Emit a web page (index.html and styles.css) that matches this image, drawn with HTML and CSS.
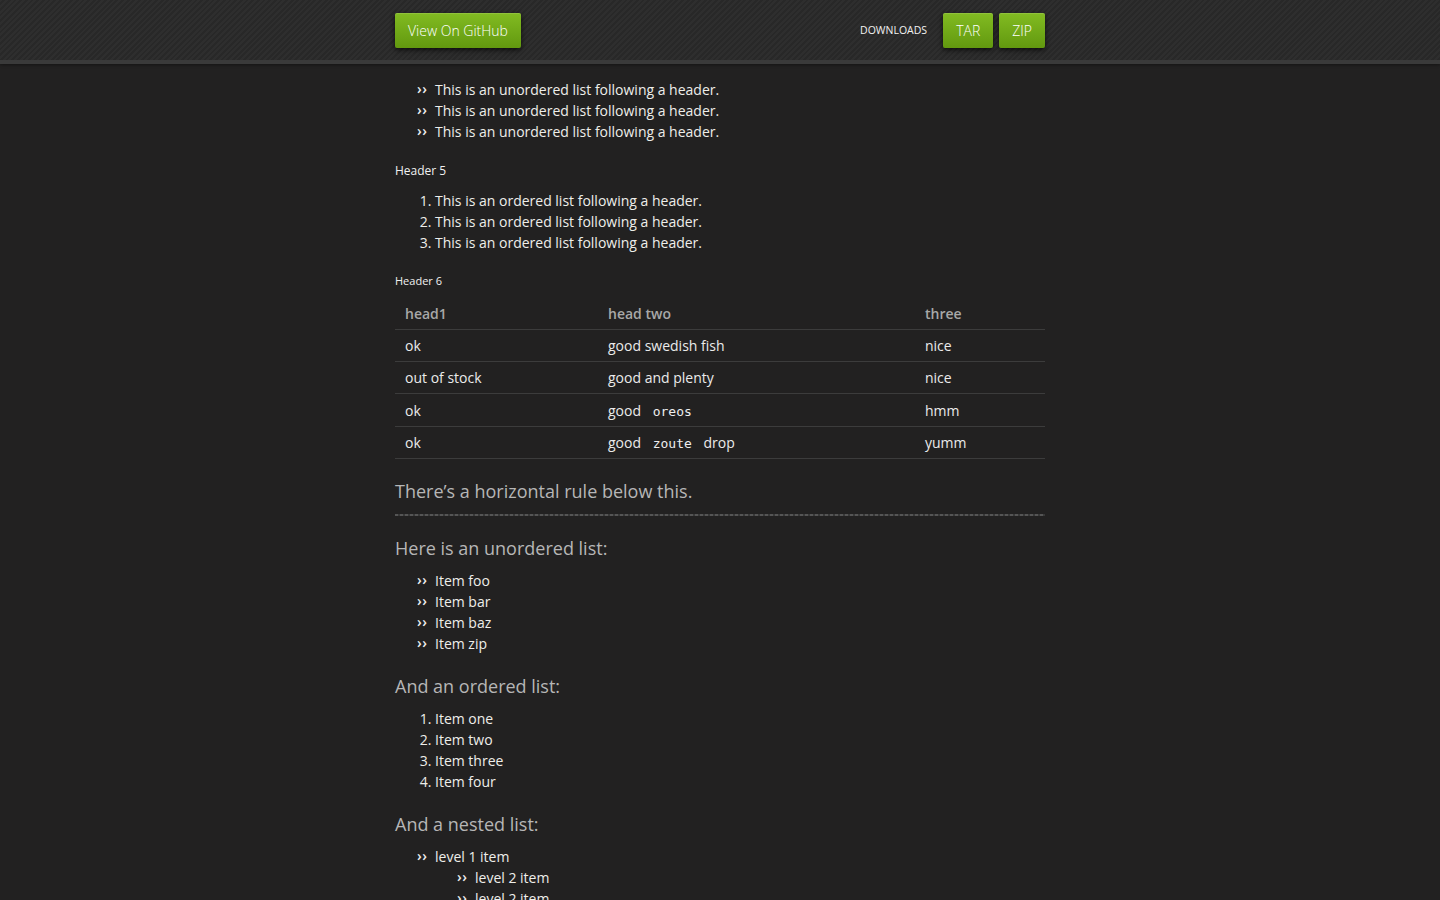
FILE: index.html
```html
<!DOCTYPE html>
<html lang="en">
<head>
<meta charset="UTF-8">
<title>Midnight</title>
<link rel="stylesheet" href="styles.css">
</head>
<body>
  <div class="header">
    <nav class="nav">
      <a class="btn btn-github" href="#">View On GitHub</a>
      <div class="downloads">
        <span class="downloads-label">Downloads</span>
        <a class="btn" href="#">TAR</a>
        <a class="btn" href="#">ZIP</a>
      </div>
    </nav>
  </div>

  <div class="wrapper">
    <ul>
      <li>This is an unordered list following a header.</li>
      <li>This is an unordered list following a header.</li>
      <li>This is an unordered list following a header.</li>
    </ul>

    <h5>Header 5</h5>
    <ol>
      <li>This is an ordered list following a header.</li>
      <li>This is an ordered list following a header.</li>
      <li>This is an ordered list following a header.</li>
    </ol>

    <h6>Header 6</h6>
    <table>
      <thead>
        <tr>
          <th class="col-1">head1</th>
          <th class="col-2">head two</th>
          <th>three</th>
        </tr>
      </thead>
      <tbody>
        <tr>
          <td>ok</td>
          <td>good swedish fish</td>
          <td>nice</td>
        </tr>
        <tr>
          <td>out of stock</td>
          <td>good and plenty</td>
          <td>nice</td>
        </tr>
        <tr>
          <td>ok</td>
          <td>good <code>oreos</code></td>
          <td>hmm</td>
        </tr>
        <tr>
          <td>ok</td>
          <td>good <code>zoute</code> drop</td>
          <td>yumm</td>
        </tr>
      </tbody>
    </table>

    <h3>There’s a horizontal rule below this.</h3>
    <hr>

    <h3>Here is an unordered list:</h3>
    <ul>
      <li>Item foo</li>
      <li>Item bar</li>
      <li>Item baz</li>
      <li>Item zip</li>
    </ul>

    <h3>And an ordered list:</h3>
    <ol>
      <li>Item one</li>
      <li>Item two</li>
      <li>Item three</li>
      <li>Item four</li>
    </ol>

    <h3>And a nested list:</h3>
    <ul>
      <li>level 1 item
        <ul>
          <li>level 2 item</li>
          <li>level 2 item
            <ul>
              <li>level 3 item</li>
              <li>level 3 item</li>
            </ul>
          </li>
        </ul>
      </li>
      <li>level 1 item</li>
    </ul>
  </div>
</body>
</html>
```

FILE: styles.css
```css
/* page */
body {
  margin: 0;
  background: #222121;
  color: #eeeeea;
  font-family: "Open Sans", "Liberation Sans", sans-serif;
  font-size: 14px;
  line-height: 21px;
}

/* striped top bar */
.header {
  height: 60px;
  background-color: #2b2b2b;
  background-image: repeating-linear-gradient(135deg, #2e2e2e 0 2px, #282828 2px 4px);
  border-bottom: 4px solid #3a3a3a;
  box-shadow: 0 1px 3px rgba(0, 0, 0, .4);
}

.nav {
  max-width: 650px;
  height: 60px;
  margin: 0 auto;
  display: flex;
  align-items: center;
  justify-content: space-between;
}

.btn {
  display: inline-block;
  height: 35px;
  line-height: 35px;
  padding: 0 13px;
  margin-top: 1px;
  color: #fff;
  font-size: 14px;
  font-weight: 300;
  text-decoration: none;
  background: linear-gradient(#82bb22, #62990f);
  border-radius: 2px;
  box-shadow: 0 2px 5px rgba(0, 0, 0, .7), inset 0 1px 0 rgba(255, 255, 255, .12);
}

.downloads {
  display: flex;
  align-items: center;
  gap: 6px;
}

.downloads-label {
  font-size: 10.5px;
  text-transform: uppercase;
  color: #f2f2f2;
  margin-right: 10px;
  margin-top: 1px;
}

/* content column */
.wrapper {
  max-width: 650px;
  margin: 0 auto;
  padding-top: 15px;
}

ul, ol {
  margin: 0;
  padding-left: 40px;
}

ul {
  list-style: none;
}

ul li {
  position: relative;
}

/* double chevron bullet */
ul li::before {
  content: "\203A\203A";
  position: absolute;
  left: -18px;
  top: -1px;
  font-weight: 600;
  font-size: 14px;
  letter-spacing: 0.5px;
  color: #f0f0f0;
}

h3 {
  margin: 19px 0 8px;
  font-size: 18px;
  line-height: 27px;
  font-weight: 400;
  color: #b6b6b6;
}

h5, h6 {
  margin: 19px 0 10px;
  font-weight: 400;
  line-height: 18px;
  color: #f0f0f0;
}

h5 {
  font-size: 12px;
  margin-top: 20px;
}

h6 {
  font-size: 11px;
  margin-bottom: 8px;
}

table {
  width: 100%;
  border-collapse: collapse;
}

th, td {
  text-align: left;
  padding: 5px 10px;
  border-bottom: 1px solid #3c3c3c;
}

th {
  font-weight: 600;
  color: #a8a8a8;
}

td {
  color: #ebebeb;
}

tbody tr:nth-child(3) td {
  padding-top: 6px;
}

.col-1 {
  width: 183px;
}

.col-2 {
  width: 297px;
}

code {
  font-family: "DejaVu Sans Mono", "Liberation Mono", monospace;
  font-size: 13px;
  line-height: 1;
  padding: 0 8px;
  color: #eee;
}

hr {
  height: 2px;
  margin: 9px 0 0;
  border: none;
  background: repeating-linear-gradient(90deg, #555 0 3px, #383838 3px 5px);
}
```
